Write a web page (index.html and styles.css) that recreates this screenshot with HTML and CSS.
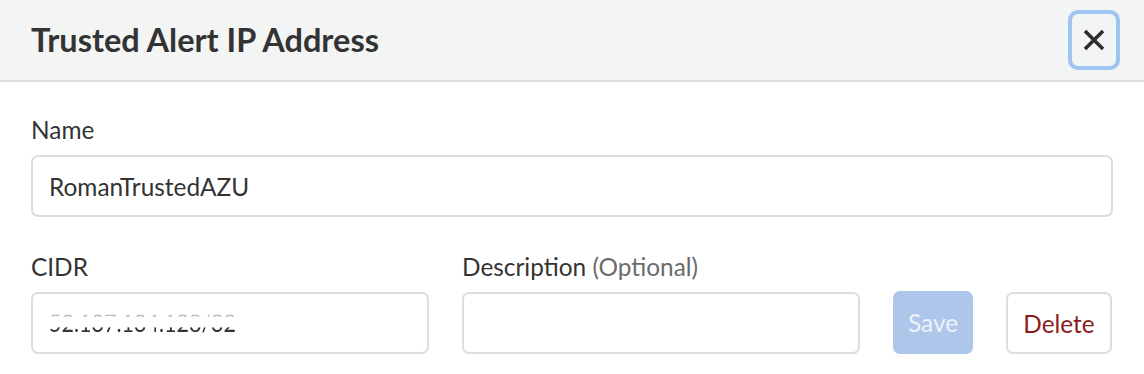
FILE: index.html
```html
<!DOCTYPE html>
<html lang="en">
<head>
<meta charset="utf-8">
<title>Trusted Alert IP Address</title>
<link rel="stylesheet" href="styles.css">
</head>
<body>
<div class="modal">
  <header class="modal-header">
    <h2 class="modal-title">Trusted Alert IP Address</h2>
    <button class="close-btn" aria-label="Close">
      <svg width="22" height="22" viewBox="0 0 22 22" aria-hidden="true">
        <path d="M2 2 L20 20 M20 2 L2 20" stroke="#2f2f2f" stroke-width="3.6" stroke-linecap="butt" fill="none"/>
      </svg>
    </button>
  </header>
  <div class="modal-body">
    <div class="field">
      <label class="label" for="name">Name</label>
      <input class="input" id="name" type="text" value="RomanTrustedAZU">
    </div>
    <div class="row">
      <div class="field">
        <label class="label">CIDR</label>
        <div class="input input-fake"><span class="glitch">52.137.134.128/32</span></div>
      </div>
      <div class="field">
        <label class="label" for="desc">Description <span class="optional">(Optional)</span></label>
        <input class="input" id="desc" type="text" value="">
      </div>
      <button class="btn btn-save">Save</button>
      <button class="btn btn-delete">Delete</button>
    </div>
  </div>
</div>
</body>
</html>
```

FILE: styles.css
```css
* { box-sizing: border-box; }
html, body {
  margin: 0;
  padding: 0;
  background: #ffffff;
}
body {
  font-family: Lato, "Open Sans", sans-serif;
  color: #333333;
  width: 1144px;
  height: 374px;
  overflow: hidden;
}
.modal-header {
  height: 82px;
  background: #f3f4f4;
  border-bottom: 2px solid #dddddd;
  display: flex;
  align-items: center;
  justify-content: space-between;
  padding: 0 24px 0 31px;
}
.modal-title {
  margin: 0;
  font-size: 32.5px;
  font-weight: 700;
  color: #333333;
  line-height: 38px;
}
.close-btn {
  width: 52px;
  height: 60px;
  border: 4px solid #9fc4f0;
  border-radius: 10px;
  background: transparent;
  display: flex;
  align-items: center;
  justify-content: center;
  padding: 0;
}
.modal-body {
  padding: 34px 31px 0 31px;
  display: flex;
  flex-direction: column;
  gap: 36px;
}
.field {
  display: flex;
  flex-direction: column;
  gap: 11px;
}
.label {
  font-size: 24.4px;
  line-height: 28px;
  color: #333333;
}
.optional { color: #6b6b6b; }
.input {
  height: 62px;
  border: 2px solid #dddddd;
  border-radius: 7px;
  padding: 0 16px;
  font-family: Lato, sans-serif;
  font-size: 24.4px;
  color: #333333;
  background: #ffffff;
  width: 100%;
  outline: none;
}
.input-fake {
  display: flex;
  align-items: center;
}
.glitch {
  display: inline-block;
  font-size: 21.5px;
  line-height: 26px;
  transform: scaleY(1.16);
  color: transparent;
  background: linear-gradient(to bottom,
    transparent 0, transparent 5.9px,
    #b8b8b8 5.9px, #b8b8b8 7.6px,
    transparent 7.6px, transparent 17.1px,
    #333333 17.1px, #333333 100%);
  -webkit-background-clip: text;
  background-clip: text;
}
.row {
  display: grid;
  grid-template-columns: 398px 398px 80px 106px;
  column-gap: 33px;
  align-items: end;
}
.btn {
  height: 63px;
  border-radius: 7px;
  font-family: Lato, sans-serif;
  font-size: 24.4px;
  padding: 0;
}
.btn-save {
  background: #adc6ea;
  border: none;
  color: #eef3fb;
}
.btn-delete {
  background: #ffffff;
  border: 2px solid #dddddd;
  color: #8b1c1c;
  height: 62px;
}
```
